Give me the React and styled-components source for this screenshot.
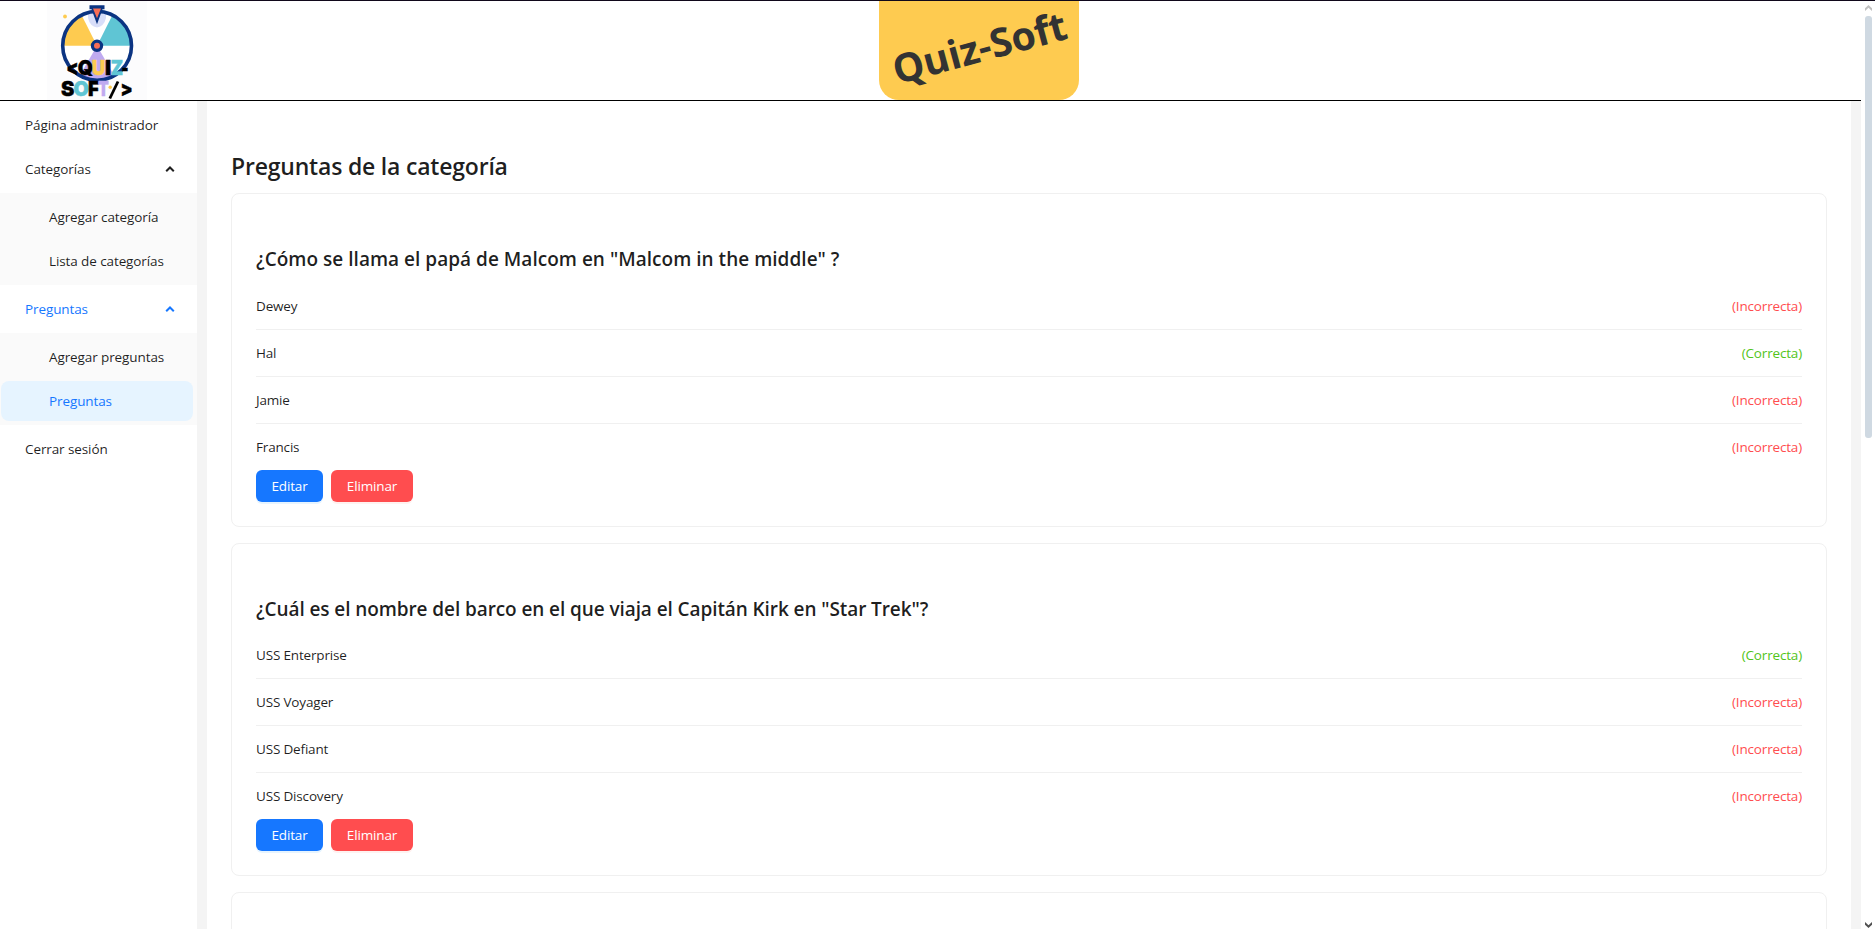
import React from 'react';
import styled, { createGlobalStyle, css } from 'styled-components';

const Global = createGlobalStyle`
  * { box-sizing: border-box; }
  html, body { margin: 0; height: 929px; overflow: hidden; background: #fff; }
  body {
    font-family: 'Open Sans', 'Noto Sans', sans-serif;
    font-size: 13.5px;
    line-height: 22px;
    color: rgba(0, 0, 0, 0.88);
  }
`;

const Window = styled.div`
  display: flex;
  width: 1875px;
  height: 929px;
  border-top: 1px solid #10081a;
  overflow: hidden;
`;

const Page = styled.div`
  flex: 1;
  display: flex;
  flex-direction: column;
  min-width: 0;
`;

const Header = styled.header`
  display: grid;
  grid-template-columns: 147px 1fr 50px;
  height: 100px;
  flex: none;
  border-bottom: 1px solid #000;
`;

const LogoBox = styled.div`
  width: 100px;
  height: 99px;
  margin-left: 47px;
  background: #fcfcfd;
`;

const Brand = styled.div`
  justify-self: center;
  width: 200px;
  height: 99px;
  display: flex;
  align-items: center;
  justify-content: center;
  background: #fecb50;
  border-radius: 0 0 20px 20px;
`;

const BrandName = styled.span`
  font-size: 39.5px;
  font-weight: 700;
  line-height: 50px;
  letter-spacing: -0.2px;
  color: #333;
  white-space: nowrap;
  transform: translate(0, -4px) rotate(-15deg);
`;

const Body = styled.div`
  flex: 1;
  display: flex;
  min-height: 0;
  background: #f4f4f4;
`;

const Sidebar = styled.nav`
  width: 197px;
  flex: none;
  background: #fff;
  padding-top: 4px;
`;

const MenuItem = styled.div`
  display: flex;
  align-items: center;
  justify-content: space-between;
  height: 40px;
  width: 192px;
  margin: 0 0 4px 1px;
  padding: 0 18px 0 ${(p) => (p.$nested ? 48 : 24)}px;
  border-radius: 8px;
  letter-spacing: -0.1px;
  white-space: nowrap;
  ${(p) => p.$accent && css`color: #1677ff;`}
  ${(p) => p.$selected && css`background: #e6f4ff;`}
`;

const SubMenu = styled.div`
  background: #fafafa;
  padding: 4px 0 0.1px;
  margin-bottom: 4px;
`;

const Content = styled.main`
  flex: 1;
  min-width: 0;
  margin: 0 10px;
  padding: 48px 24px 0;
  background: #fff;
  overflow: hidden;
`;

const Title = styled.h3`
  margin: 0 0 12.4px;
  height: 32px;
  font-size: 23px;
  font-weight: 600;
  line-height: 34px;
  letter-spacing: -0.2px;
`;

const Card = styled.section`
  height: 333.14px;
  margin-bottom: 16px;
  padding: 51px 24px 0;
  border: 1px solid #f0f0f0;
  border-radius: 8px;
`;

const Question = styled.h4`
  margin: 0 0 9.6px;
  font-size: 19px;
  font-weight: 600;
  line-height: 29px;
  height: 28px;
  letter-spacing: ${(p) => p.$tracking}px;
`;

const Answer = styled.div`
  display: flex;
  justify-content: space-between;
  align-items: center;
  height: 47px;
  letter-spacing: -0.17px;
  border-bottom: 1px solid #f0f0f0;
  &:last-of-type { border-bottom: 0; height: 46px; }
`;

const Verdict = styled.span`
  color: ${(p) => (p.$ok ? '#52c41a' : '#ff4d4f')};
`;

const Actions = styled.footer`
  display: flex;
  gap: 8px;
`;

const Button = styled.button`
  width: ${(p) => (p.$danger ? 82 : 67)}px;
  height: 32px;
  padding: 0;
  border: 0;
  border-radius: 6px;
  font: inherit;
  letter-spacing: -0.15px;
  color: #fff;
  background: ${(p) => (p.$danger ? '#ff4d4f' : '#1677ff')};
  box-shadow: 0 2px 0 ${(p) => (p.$danger ? 'rgba(255, 38, 5, 0.06)' : 'rgba(5, 145, 255, 0.1)')};
`;

const Scrollbar = styled.div`
  width: 14px;
  flex: none;
  display: flex;
  flex-direction: column;
  justify-content: space-between;
  padding: 4px 3px 1px 4px;
  background: #fff;
`;

const Thumb = styled.div`
  width: 7px;
  height: 422px;
  margin: 4px 0 auto;
  border-radius: 3px;
  background: #cfd9e2;
`;

const Arrow = ({ down, color }) => (
  <svg width="7" height="7" viewBox="0 0 7 7">
    <path d={down ? 'M0 1 3.5 4.2 7 1V3.7L3.5 7 0 3.7Z' : 'M0 6 3.5 2.8 7 6V3.3L3.5 0 0 3.3Z'} fill={color} />
  </svg>
);

const Chevron = () => (
  <svg width="10" height="8" viewBox="0 0 10 8" fill="none" stroke="currentColor" strokeWidth="2">
    <path d="M1.2 6.3 5 2.5l3.8 3.8" />
  </svg>
);

const Glyph = ({ x, y, w, color = '#000', children }) => (
  <text x={x} y={y} textLength={w} lengthAdjust="spacingAndGlyphs" fill={color} stroke={color} strokeWidth="0.4">
    {children}
  </text>
);

const Logo = () => (
  <svg width="100" height="99" viewBox="0 0 100 99" fontFamily="Inter, sans-serif" fontWeight="900" fontSize="20.5">
    <circle cx="50.1" cy="44.8" r="34.5" fill="#fff" />
    <path d="M50 44.8H15.5A34.5 34.5 0 0 1 34.5 14Z" fill="#fecb50" />
    <path d="M50 44.8H84.5A34.5 34.5 0 0 0 65.5 14Z" fill="#5fc5d4" />
    <path d="M50 44.8 32.7 74.7A34.5 34.5 0 0 0 67.3 74.7Z" fill="#bfaaf0" />
    <path d="M41 12.5V17Q43 25.5 50 26.5Q57 25.5 59 17V12.5Z" fill="#d8def9" />
    <circle cx="50.1" cy="44.8" r="34.4" fill="none" stroke="#0b3482" strokeWidth="3.6" />
    <path d="M42.5 4.3h15v4h-2L50 23.3 44.5 8.3h-2Z" fill="#0b3482" />
    <path d="M46 7.6h8L50 17.2Z" fill="#f86d55" />
    <circle cx="50" cy="44.8" r="4.6" fill="#f86d55" stroke="#0b3482" strokeWidth="3.2" />
    <circle cx="18" cy="15.5" r="1.9" fill="#fecb50" />
    <Glyph x="19.2" y="73.5" w="12.2">&lt;</Glyph>
    <Glyph x="30.8" y="73.5" w="15.4">Q</Glyph>
    <Glyph x="44.7" y="73.5" w="13.6" color="#fecb50">U</Glyph>
    <Glyph x="58" y="73.5" w="6.2">I</Glyph>
    <Glyph x="63.8" y="73.5" w="12.4" color="#5fc5d4">Z</Glyph>
    <Glyph x="74.6" y="73.5" w="7">-</Glyph>
    <Glyph x="14" y="94.5" w="13.4">S</Glyph>
    <Glyph x="26.6" y="94.5" w="15.4" color="#5fc5d4">O</Glyph>
    <Glyph x="41" y="94.5" w="11">F</Glyph>
    <Glyph x="51" y="94.5" w="10.8" color="#bfaaf0">T</Glyph>
    <Glyph x="73.4" y="94.5" w="12.2">&gt;</Glyph>
    <path d="M62.8 97.5 71 80.5" stroke="#000" strokeWidth="2.8" />
    <circle cx="63.2" cy="86.3" r="1.7" fill="#fecb50" />
  </svg>
);

const cards = [
  {
    question: '¿Cómo se llama el papá de Malcom en "Malcom in the middle" ?',
    tracking: 0.02,
    answers: [['Dewey', false], ['Hal', true], ['Jamie', false], ['Francis', false]],
  },
  {
    question: '¿Cuál es el nombre del barco en el que viaja el Capitán Kirk en "Star Trek"?',
    tracking: -0.09,
    answers: [['USS Enterprise', true], ['USS Voyager', false], ['USS Defiant', false], ['USS Discovery', false]],
  },
];

export default function App() {
  return (
    <>
      <Global />
      <Window>
        <Page>
          <Header>
            <LogoBox><Logo /></LogoBox>
            <Brand><BrandName>Quiz-Soft</BrandName></Brand>
          </Header>
          <Body>
            <Sidebar>
              <MenuItem>Página administrador</MenuItem>
              <MenuItem>Categorías<Chevron /></MenuItem>
              <SubMenu>
                <MenuItem $nested>Agregar categoría</MenuItem>
                <MenuItem $nested>Lista de categorías</MenuItem>
              </SubMenu>
              <MenuItem $accent>Preguntas<Chevron /></MenuItem>
              <SubMenu>
                <MenuItem $nested>Agregar preguntas</MenuItem>
                <MenuItem $nested $accent $selected>Preguntas</MenuItem>
              </SubMenu>
              <MenuItem>Cerrar sesión</MenuItem>
            </Sidebar>
            <Content>
              <Title>Preguntas de la categoría</Title>
              {cards.map((card) => (
                <Card key={card.question}>
                  <Question $tracking={card.tracking}>{card.question}</Question>
                  {card.answers.map(([text, ok]) => (
                    <Answer key={text}>
                      <span>{text}</span>
                      <Verdict $ok={ok}>{ok ? '(Correcta)' : '(Incorrecta)'}</Verdict>
                    </Answer>
                  ))}
                  <Actions>
                    <Button>Editar</Button>
                    <Button $danger>Eliminar</Button>
                  </Actions>
                </Card>
              ))}
              <Card />
            </Content>
          </Body>
        </Page>
        <Scrollbar>
          <Arrow color="#c1c1c1" />
          <Thumb />
          <Arrow down color="#505050" />
        </Scrollbar>
      </Window>
    </>
  );
}
